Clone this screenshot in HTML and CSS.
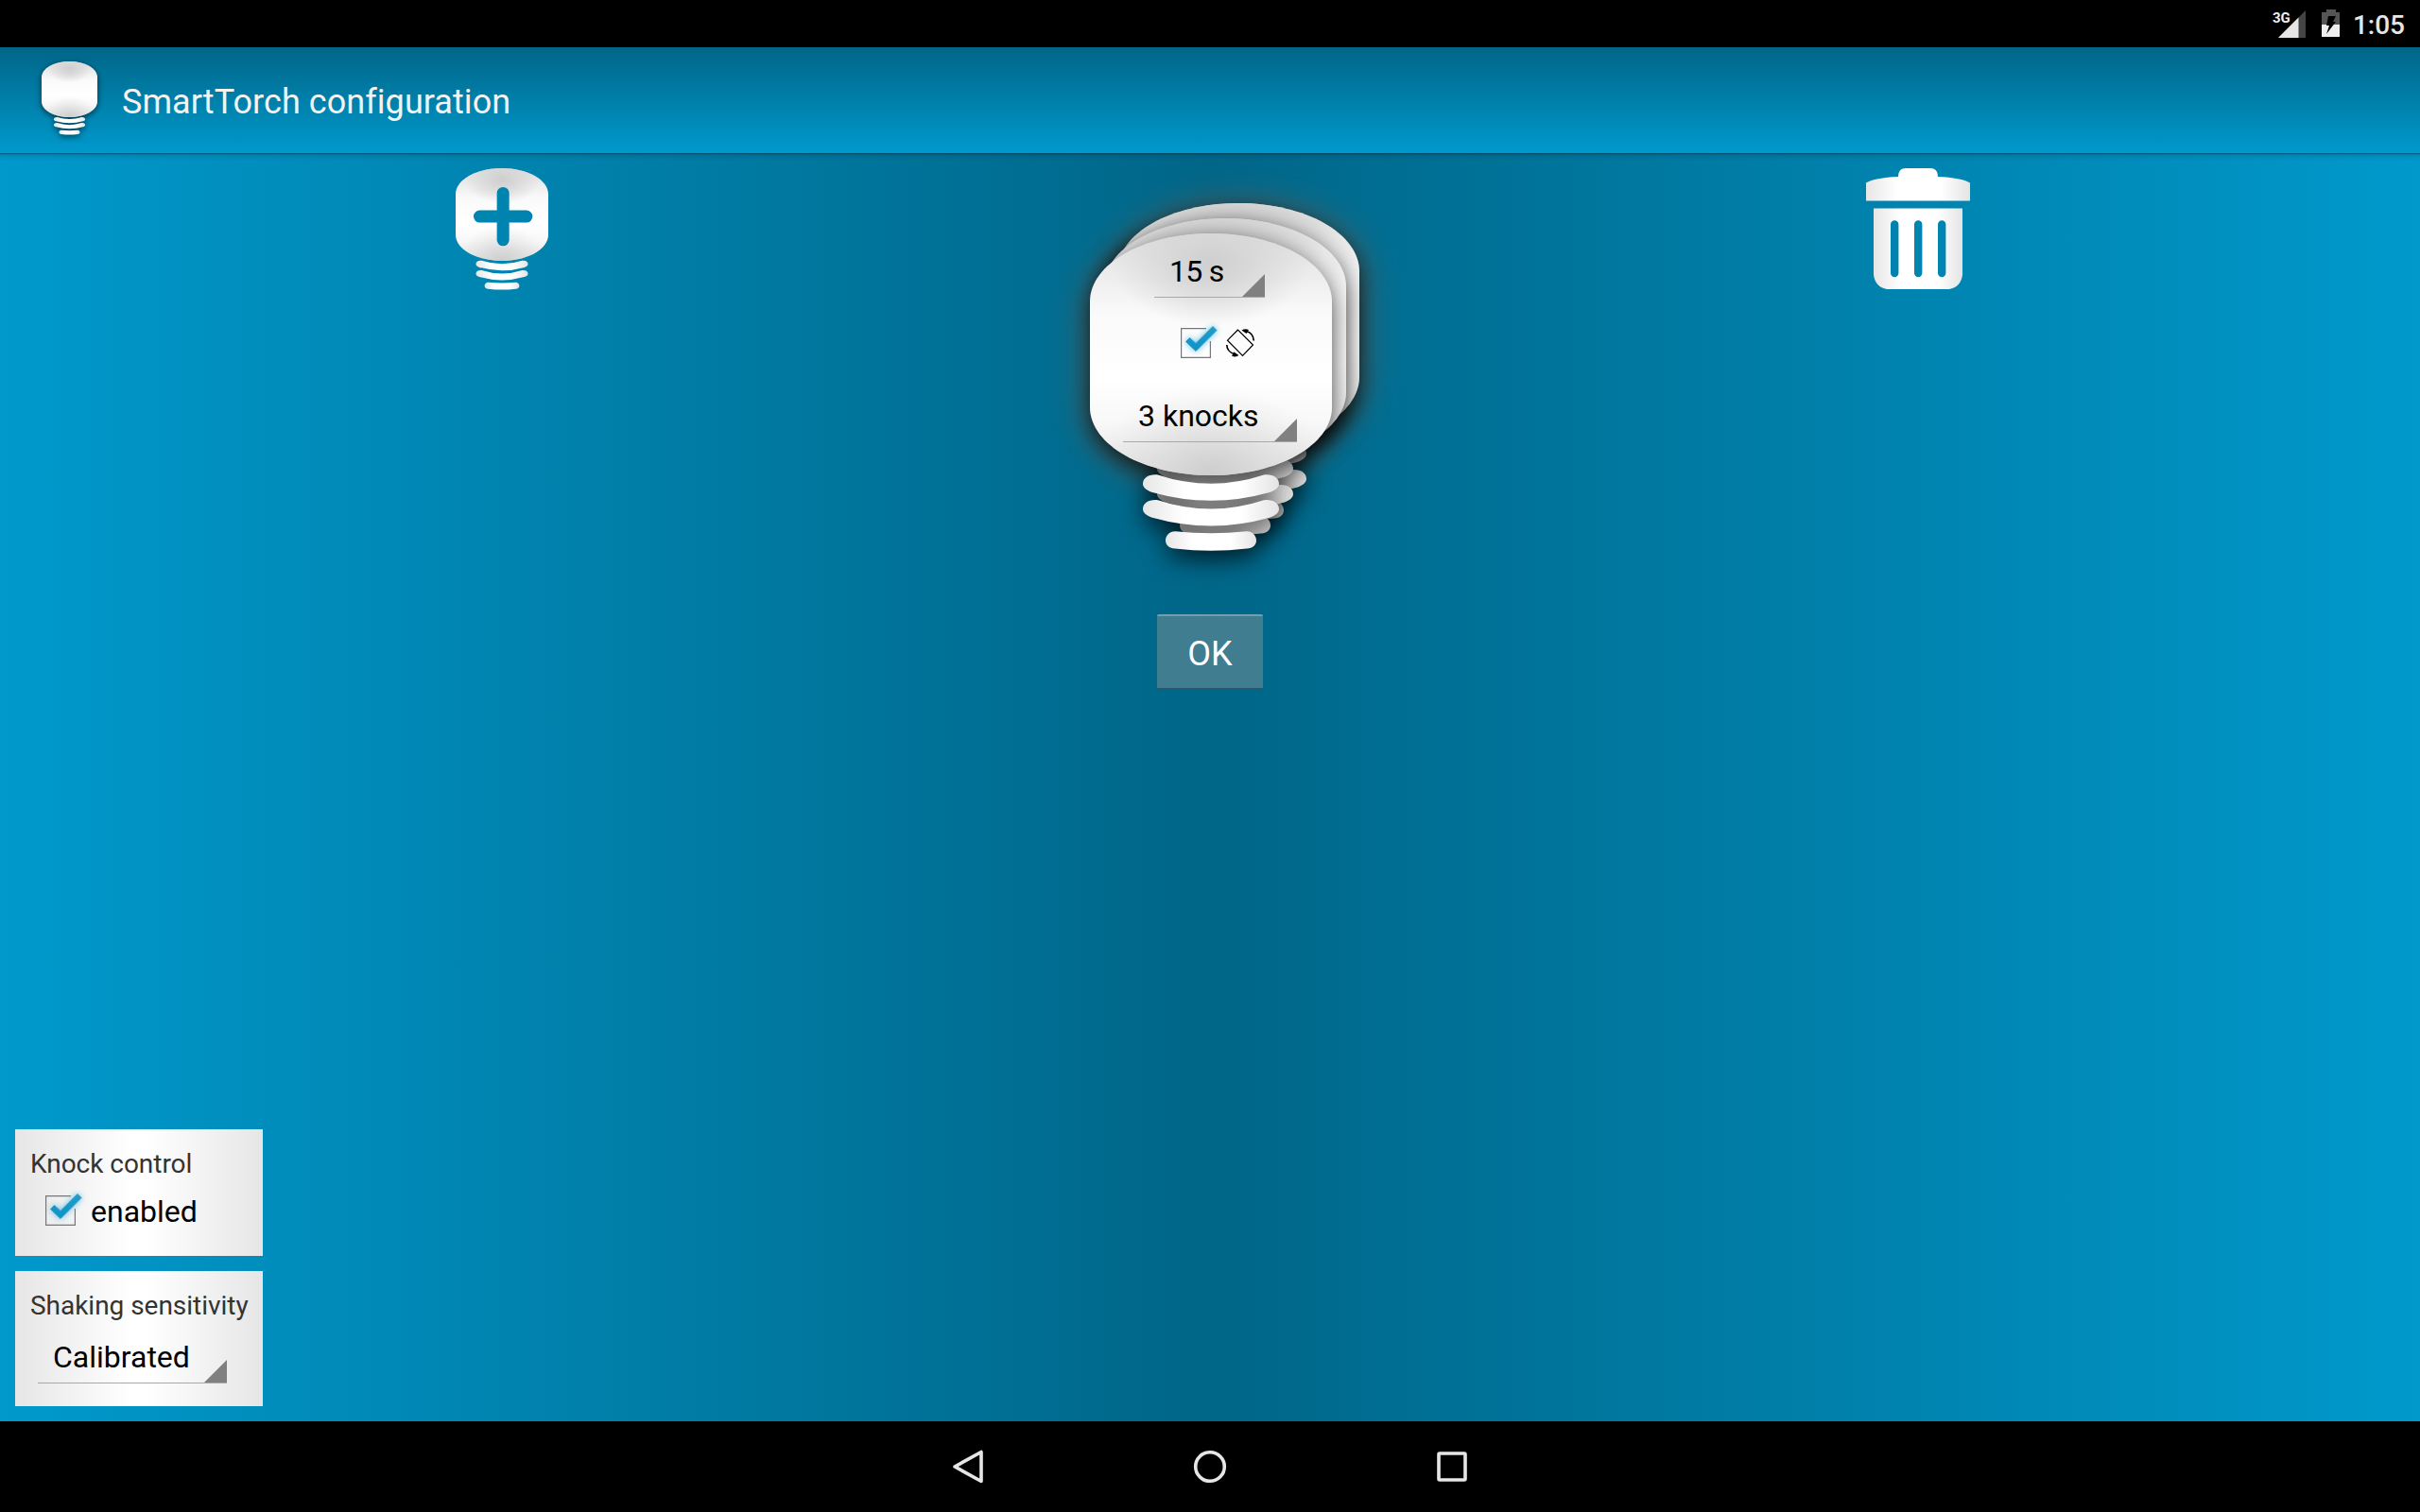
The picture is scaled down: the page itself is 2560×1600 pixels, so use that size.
FILE: index.html
```html
<!DOCTYPE html>
<html lang="en">
<head>
<meta charset="utf-8">
<title>SmartTorch configuration</title>
<link rel="stylesheet" href="styles.css">
</head>
<body>
<svg class="defs" width="0" height="0" aria-hidden="true">
  <defs>
    <radialGradient id="shade" gradientUnits="userSpaceOnUse" cx="0" cy="0" r="1" gradientTransform="translate(128 30) scale(105 68)">
      <stop offset="0" stop-color="#cfcfcf"/>
      <stop offset="0.3" stop-color="#d6d6d6"/>
      <stop offset="1" stop-color="#d6d6d6" stop-opacity="0"/>
    </radialGradient>
    <radialGradient id="shadeLow" gradientUnits="userSpaceOnUse" cx="0" cy="0" r="1" gradientTransform="translate(128 256) scale(125 95)">
      <stop offset="0" stop-color="#cdcdcd"/>
      <stop offset="1" stop-color="#dcdcdc" stop-opacity="0"/>
    </radialGradient>
    <linearGradient id="glass" x1="0" y1="0" x2="0" y2="1">
      <stop offset="0" stop-color="#dedede"/>
      <stop offset="0.33" stop-color="#fafafa"/>
      <stop offset="0.6" stop-color="#fff"/>
      <stop offset="0.78" stop-color="#f8f8f8"/>
      <stop offset="1" stop-color="#e2e2e2"/>
    </linearGradient>
    <linearGradient id="metal" x1="0" y1="0" x2="1" y2="0">
      <stop offset="0" stop-color="#e6e6e6"/>
      <stop offset="0.3" stop-color="#fff"/>
      <stop offset="0.72" stop-color="#fff"/>
      <stop offset="1" stop-color="#e4e4e4"/>
    </linearGradient>
    <linearGradient id="tick" x1="0" y1="0" x2="0" y2="1">
      <stop offset="0" stop-color="#1c9fd0"/>
      <stop offset="1" stop-color="#0a93c8"/>
    </linearGradient>
    <path id="glass-shape" d="M0 72C0 32 57 0 128 0S256 32 256 72V184C256 224 199 256 128 256S0 224 0 184Z"/>
    <path id="ring" d="M72 255.500Q128 274 184 255.500C194 254.500 200 259 200 265C200 269 196 272 190 274Q128 291.500 66 274C60 272 56 269 56 265C56 259 62 254.500 72 255.500Z"/>
    <g id="thread" fill="url(#metal)">
      <use href="#ring"/>
      <use href="#ring" y="26.700"/>
      <path d="M90 315.300Q128 319 166 315.300C172 315.300 176 320 176 325C176 330 172 333 166 333.500Q128 338 90 333.500C84 333 80 330 80 325C80 320 84 315.300 90 315.300Z"/>
    </g>
    <g id="bulb">
      <use href="#glass-shape" fill="url(#glass)"/>
      <use href="#glass-shape" fill="url(#shade)"/>
      <use href="#glass-shape" fill="url(#shadeLow)"/>
      <use href="#thread"/>
    </g>
    <mask id="plus-cut">
      <rect width="256" height="256" fill="#fff"/>
      <path d="M131 69V198M66.500 133.500H195.500" stroke="#000" stroke-width="34" stroke-linecap="round"/>
    </mask>
    <g id="check">
      <path d="M27 .6H.6V31.400H31.400V14" fill="none" stroke="#777" stroke-width="1.200"/>
      <path d="M5.500 14.500L9.500 10.500L16 16.500L34 -1.500L38 2.500L16 24.500Z" fill="url(#tick)" stroke="#4a90ad" stroke-width="1" class="tick"/>
    </g>
  </defs>
</svg>

<header class="status">
  <svg class="signal" width="38" height="32" viewBox="0 0 38 32">
    <path d="M35 0V29H6Z" fill="#444"/>
    <path d="M27.500 7.500V29H6Z" fill="#e6e6e6"/>
    <text x="0" y="13" class="net">3G</text>
  </svg>
  <svg class="battery" width="20" height="30" viewBox="0 0 20 30">
    <path d="M5 0H15V3H19V16H0V3H5Z" fill="#555"/>
    <path d="M0 16H19V29H0Z" fill="#eee"/>
    <path d="M7 7H15L12 13H15L5 26L8 17H5Z" fill="#000"/>
  </svg>
  <span class="clock">1:05</span>
</header>

<div class="actionbar">
  <svg class="app-icon" width="59" height="78" viewBox="0 0 256 338"><use href="#bulb"/></svg>
  <h1>SmartTorch configuration</h1>
</div>

<main>
  <div class="columns">
    <svg class="add" width="98" height="129" viewBox="0 0 256 337">
      <g mask="url(#plus-cut)">
        <use href="#glass-shape" fill="url(#glass)"/>
        <use href="#glass-shape" fill="url(#shade)"/>
        <use href="#glass-shape" fill="url(#shadeLow)"/>
      </g>
      <use href="#thread"/>
    </svg>

    <div class="center">
      <div class="lamp">
        <svg class="stack" width="286" height="370" viewBox="0 -33 286 370">
          <g class="warm">
            <use href="#glass-shape" y="4"/>
            <use href="#glass-shape" x="29" y="-28"/>
          </g>
          <g class="layer"><use href="#bulb" x="29" y="-32"/></g>
          <g class="layer"><use href="#bulb" x="15" y="-16"/></g>
          <g class="layer"><use href="#bulb"/></g>
        </svg>
        <div class="fields">
          <div class="spinner seconds">15 s</div>
          <div class="rotate-row">
            <svg class="check" width="40" height="36" viewBox="0 -2 40 36"><use href="#check"/></svg>
            <svg class="rotate" width="30" height="30" viewBox="0 0 30 30" fill="none" stroke="#000" stroke-width="1.200">
              <path d="M12.500 1L1.500 12.200L17.500 28.500L28.500 17Z"/>
              <path d="M21 2.500C26 3.500 29 7.500 29.300 12.500M9 26.500C4 25.500 1 21.500 .7 17" stroke-width="1.700"/>
              <path d="M16.500 1.500Q20 -.5 24 1L21.500 5ZM13.500 28Q10 30.500 6 28.500L8.500 24.500Z" fill="#000" stroke="none"/>
            </svg>
          </div>
          <div class="spinner knocks">3 knocks</div>
        </div>
      </div>
      <button class="ok">OK</button>
    </div>

    <svg class="trash" width="110" height="128" viewBox="0 0 110 128">
      <path fill="url(#metal)" d="M0 34.500V15.500Q9 10 34 9Q34 0 42 0H68Q76 0 76 9Q101 10 110 15.500V34.500Z"/>
      <path fill="url(#metal)" fill-rule="evenodd" d="M8 42.500H102V113Q100 126 88 128H22Q10 126 8 113ZM26 59.500V111a4.200 4.200 0 0 0 8.400 0V59.500a4.200 4.200 0 0 0 -8.400 0ZM51 59.500V111a4.200 4.200 0 0 0 8.400 0V59.500a4.200 4.200 0 0 0 -8.400 0ZM76 59.500V111a4.200 4.200 0 0 0 8.400 0V59.500a4.200 4.200 0 0 0 -8.400 0Z"/>
    </svg>
  </div>

  <div class="settings">
    <section class="panel knock">
      <h2>Knock control</h2>
      <label>
        <svg class="check" width="40" height="36" viewBox="0 -2 40 36"><use href="#check"/></svg>
        <span>enabled</span>
      </label>
    </section>
    <section class="panel shaking">
      <h2>Shaking sensitivity</h2>
      <div class="spinner calibrated">Calibrated</div>
    </section>
  </div>
</main>

<nav class="navbar">
  <svg width="256" height="96" viewBox="0 0 256 96"><path d="M142 32.500V63.500L114 48Z"/></svg>
  <svg width="256" height="96" viewBox="0 0 256 96"><circle cx="128" cy="48" r="15.300"/></svg>
  <svg width="256" height="96" viewBox="0 0 256 96"><rect x="114" y="34" width="28" height="28" rx="1"/></svg>
</nav>
</body>
</html>
```

FILE: styles.css
```css
* { box-sizing: border-box; }

body {
  margin: 0;
  width: 2560px;
  height: 1600px;
  display: flex;
  flex-direction: column;
  overflow: hidden;
  background: #000;
  font-family: Roboto, "Liberation Sans", sans-serif;
  color: #000;
}

svg { display: block; overflow: visible; flex: none; }
.defs { height: 0; position: absolute; }

.status {
  height: 50px;
  flex: none;
  display: flex;
  justify-content: flex-end;
  padding: 10px 16px 0 0;
}
.signal { margin: 1px 14px 0 0; }
.net { font-size: 15px; font-weight: 700; fill: #eee; }
.battery { margin-right: 13px; }
.clock { font-size: 28px; line-height: 33px; color: #e6e6e6; font-weight: 500; }

.actionbar {
  height: 112px;
  flex: none;
  display: flex;
  padding: 14.500px 0 0 44px;
  background: linear-gradient(#006688, #0099cc);
}
.app-icon { filter: drop-shadow(0 2px 3px rgba(0, 0, 0, .6)); }
h1 {
  margin: 22.500px 0 0 26px;
  font-size: 36px;
  line-height: 42px;
  letter-spacing: .06px;
  font-weight: 400;
  color: #f3f3f3;
}

main {
  flex: 1;
  min-height: 0;
  display: flex;
  flex-direction: column;
  justify-content: space-between;
  padding: 16px 16px 16px;
  background:
    linear-gradient(rgba(0, 30, 50, .5), rgba(0, 30, 50, .12) 2px, transparent 8px),
    linear-gradient(90deg, #0099cc, #006688 50%, #0099cc);
}

.columns { display: grid; grid-template-columns: 1fr 290px 1fr; }
.add { margin-left: 466px; }
.trash { margin-left: 549px; }
.center { display: flex; flex-direction: column; }

.lamp { display: grid; width: 286px; margin: 36px 0 0 18.300px; }
.stack, .fields { grid-area: 1 / 1; }
.warm { fill: #b06a44; opacity: .6; filter: blur(20px); }
.layer { filter: drop-shadow(0 8px 13px rgba(0, 0, 0, .75)); }

.fields { display: flex; flex-direction: column; align-items: flex-start; }
.spinner {
  position: relative;
  font-size: 32px;
  line-height: 38px;
  height: 50px;
  padding: 3px 0 0 16px;
  white-space: nowrap;
  border-bottom: 1px solid #a8a8a8;
}
.spinner::after {
  content: "";
  position: absolute;
  right: 0;
  bottom: 0;
  width: 24px;
  height: 24px;
  background: #808080;
  clip-path: polygon(100% 0, 100% 100%, 0 100%);
}
.seconds { width: 117px; margin: 51px 0 0 67.700px; letter-spacing: -.7px; }
.rotate-row { display: flex; margin: 30px 0 0 95.700px; gap: 8px; }
.rotate { margin-top: 3px; }
.knocks { width: 184px; margin: 37px 0 0 34.700px; }
.tick { filter: drop-shadow(0 0 3px rgba(60, 190, 240, .9)); }

.ok {
  align-self: flex-start;
  width: 112px;
  height: 80px;
  margin: 66px 0 0 89px;
  padding: 4px 0 0;
  border: 0;
  border-top: 2px solid #70a0b0;
  border-bottom: 2px solid #28586a;
  border-radius: 2px;
  background: #407d91;
  color: #fff;
  font: 400 36px/42px Roboto, sans-serif;
}

.settings { display: flex; flex-direction: column; gap: 16px; width: 262px; }
.panel {
  padding: 20px 16px 0;
  background: linear-gradient(90deg, #e6e6e6, #fff 47%, #fff 53%, #e6e6e6);
}
.knock { height: 134px; }
.shaking { height: 143px; }
h2 { margin: 0; font-size: 28px; line-height: 33px; font-weight: 400; letter-spacing: -.03px; color: #333; white-space: nowrap; }
label { display: flex; padding: 15px 0 0 16px; gap: 8px; font-size: 32px; line-height: 38px; }
.calibrated { width: 200px; margin: 16px 0 0 8px; }

.navbar { height: 96px; flex: none; display: flex; justify-content: center; }
.navbar svg { fill: none; stroke: #e6e6e6; stroke-width: 3.600; stroke-linejoin: round; }
```
